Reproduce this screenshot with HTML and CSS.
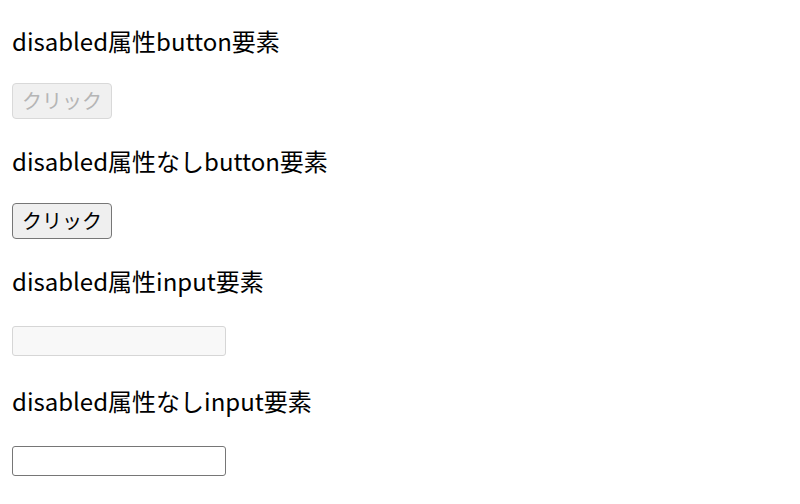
FILE: index.html
```html
<!DOCTYPE html>
<html lang="ja">
<head>
    <meta charset="UTF-8">
    <meta name="viewport" content="width=device-width, initial-scale=1.0">
    <title>disabled属性</title>
    <link rel="stylesheet" href="styles.css">
</head>
<body>
    <div class="page">
        <p class="label">disabled属性button要素</p>
        <div class="row">
            <button class="btn" disabled>クリック</button>
        </div>

        <p class="label">disabled属性なしbutton要素</p>
        <div class="row">
            <button class="btn">クリック</button>
        </div>

        <p class="label">disabled属性input要素</p>
        <div class="row">
            <input type="text" class="field" disabled>
        </div>

        <p class="label">disabled属性なしinput要素</p>
        <div class="row">
            <input type="text" class="field">
        </div>
    </div>
</body>
</html>
```

FILE: styles.css
```css
body {
    margin: 0;
    font-family: "Noto Sans CJK JP", "Noto Sans", sans-serif;
    font-size: 24px;
    line-height: 36px;
    color: #000;
    background: #fff;
}

.page {
    display: flex;
    flex-direction: column;
    align-items: flex-start;
    gap: 24px;
    padding: 23px 12px;
}

.label {
    margin: 0;
    line-height: 36px;
}

.row {
    display: flex;
    align-items: center;
    height: 36px;
}

.btn {
    box-sizing: border-box;
    width: 100px;
    height: 36px;
    padding: 0 9px;
    font-family: "Noto Sans CJK JP", sans-serif;
    font-size: 20px;
    line-height: 1;
    color: #000;
    background: #efefef;
    border: 1.5px solid #767676;
    border-radius: 4px;
}

.btn:disabled {
    color: #b5b5b5;
    background: #f0f0f0;
    border-color: #d9d9d9;
}

.field {
    box-sizing: border-box;
    width: 214px;
    height: 30px;
    margin: 0;
    padding: 0 3px;
    font-size: 20px;
    background: #fff;
    border: 1.5px solid #767676;
    border-radius: 3px;
}

.field:disabled {
    background: #f8f8f8;
    border-color: #d6d6d6;
}
```
